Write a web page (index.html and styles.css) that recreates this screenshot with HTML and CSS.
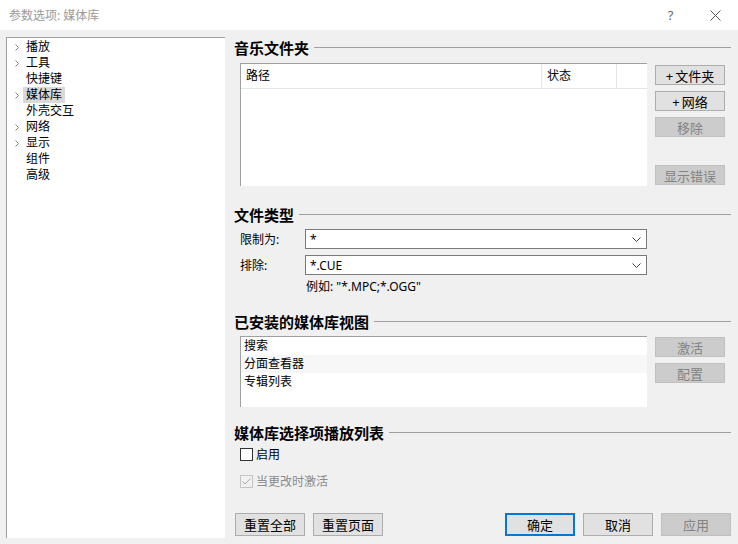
FILE: index.html
```html
<!DOCTYPE html>
<html>
<head>
<meta charset="utf-8">
<title>参数选项: 媒体库</title>
<link rel="stylesheet" href="styles.css">
</head>
<body>
<div class="window">

	<!-- start:titlebar -->
	<div class="titlebar">
		<div class="title">参数选项: 媒体库</div>
		<div class="caption-btn help">?</div>
		<div class="caption-btn close">
			<svg width="11" height="11" viewBox="0 0 11 11"><path d="M0.5 0.5 L10.5 10.5 M10.5 0.5 L0.5 10.5" stroke="#555" stroke-width="1" fill="none"/></svg>
		</div>
	</div>
	<!-- end:titlebar -->

	<div class="main">

		<!-- start:tree -->
		<ul class="tree">
			<li><span class="chev"><svg width="4" height="7" viewBox="0 0 4 7"><polyline points="0.5,0.5 3.5,3.5 0.5,6.5" fill="none" stroke="#8c8c8c"/></svg></span><span class="label">播放</span></li>
			<li><span class="chev"><svg width="4" height="7" viewBox="0 0 4 7"><polyline points="0.5,0.5 3.5,3.5 0.5,6.5" fill="none" stroke="#8c8c8c"/></svg></span><span class="label">工具</span></li>
			<li><span class="chev"></span><span class="label">快捷键</span></li>
			<li><span class="chev"><svg width="4" height="7" viewBox="0 0 4 7"><polyline points="0.5,0.5 3.5,3.5 0.5,6.5" fill="none" stroke="#8c8c8c"/></svg></span><span class="label selected">媒体库</span></li>
			<li><span class="chev"></span><span class="label">外壳交互</span></li>
			<li><span class="chev"><svg width="4" height="7" viewBox="0 0 4 7"><polyline points="0.5,0.5 3.5,3.5 0.5,6.5" fill="none" stroke="#8c8c8c"/></svg></span><span class="label">网络</span></li>
			<li><span class="chev"><svg width="4" height="7" viewBox="0 0 4 7"><polyline points="0.5,0.5 3.5,3.5 0.5,6.5" fill="none" stroke="#8c8c8c"/></svg></span><span class="label">显示</span></li>
			<li><span class="chev"></span><span class="label">组件</span></li>
			<li><span class="chev"></span><span class="label">高级</span></li>
		</ul>
		<!-- end:tree -->

		<!-- start:content -->
		<div class="content">

			<div class="section-head">音乐文件夹</div>
			<div class="folders">
				<div class="listbox folder-list">
					<div class="list-header">
						<div class="col col-path">路径</div>
						<div class="col col-state">状态</div>
						<div class="col col-fill"></div>
					</div>
				</div>
				<div class="side-buttons">
					<div class="btn">+&thinsp;文件夹</div>
					<div class="btn">+&thinsp;网络</div>
					<div class="btn disabled">移除</div>
					<div class="btn disabled push-down">显示错误</div>
				</div>
			</div>

			<div class="section-head types-head">文件类型</div>
			<div class="field first-field">
				<div class="field-label">限制为:</div>
				<div class="combo"><span>*</span><svg width="9" height="5" viewBox="0 0 9 5"><polyline points="0.5,0.5 4.5,4.5 8.5,0.5" fill="none" stroke="#404040"/></svg></div>
			</div>
			<div class="field">
				<div class="field-label">排除:</div>
				<div class="combo"><span>*.CUE</span><svg width="9" height="5" viewBox="0 0 9 5"><polyline points="0.5,0.5 4.5,4.5 8.5,0.5" fill="none" stroke="#404040"/></svg></div>
			</div>
			<div class="hint">例如: "*.MPC;*.OGG"</div>

			<div class="section-head views-head">已安装的媒体库视图</div>
			<div class="views">
				<ul class="listbox view-list">
					<li>搜索</li>
					<li class="hot">分面查看器</li>
					<li>专辑列表</li>
				</ul>
				<div class="side-buttons">
					<div class="btn disabled">激活</div>
					<div class="btn disabled">配置</div>
				</div>
			</div>

			<div class="section-head playlist-head">媒体库选择项播放列表</div>
			<div class="check-row enable-row"><span class="checkbox"></span>启用</div>
			<div class="check-row off-row"><span class="checkbox checked"><svg width="11" height="11" viewBox="0 0 11 11"><polyline points="1.5,5.5 4,8 9.5,2.5" fill="none" stroke="#a8a8a8" stroke-width="1"/></svg></span>当更改时激活</div>

			<div class="footer">
				<div class="btn big">重置全部</div>
				<div class="btn big">重置页面</div>
				<div class="btn big default">确定</div>
				<div class="btn big">取消</div>
				<div class="btn big disabled">应用</div>
			</div>

		</div>
		<!-- end:content -->

	</div>
</div>
</body>
</html>
```

FILE: styles.css
```css
body,ul,li,div {margin:0; padding:0;}
ul {list-style:none;}
* {box-sizing:border-box;}

/* ---------- STRUCTURE ---------- */
body {background:#f0f0f0; color:#000; font:12px "Noto Sans", "Noto Sans CJK SC", sans-serif;}
.window {width:738px; height:544px; overflow:hidden;}
.titlebar {height:30px; background:#fff; display:flex; align-items:center; padding-left:9px;}
.title {flex:1; color:#9a9a9a;}
.caption-btn {width:45px; height:30px; display:flex; align-items:center; justify-content:center; color:#666; font-size:13px;}
.main {display:flex; padding:7px 0 0 6px;}
.content {width:497px; margin-left:9px; display:flex; flex-direction:column;}

/* ---------- TREE ---------- */
.tree {width:219px; height:501px; background:#fff; border-top:1px solid #a0a0a0; border-left:1px solid #a0a0a0; padding-top:1px;}
.tree li {height:16px; line-height:16px; display:flex; align-items:center;}
.chev {width:16px; padding-left:8px; display:flex; align-items:center;}
.label {padding:0 3px; line-height:16px;}
.selected {background:#d9d9d9;}

/* ---------- SECTIONS ---------- */
.section-head {height:20px; display:flex; align-items:center; gap:5px; font-size:15px; font-weight:bold; white-space:nowrap;}
.section-head::after {content:""; flex:1; border-top:1px solid #a0a0a0; margin-top:1px;}
.types-head {margin-top:18px;}
.views-head {margin-top:16px;}
.playlist-head {margin-top:15px;}

.listbox {background:#fff; border-top:1px solid #a0a0a0; border-left:1px solid #a0a0a0; margin-left:6px; width:407px;}
.folders, .views {display:flex;}
.folders {margin-top:6px;}
.folder-list {height:123px;}
.list-header {display:flex; height:25px; border-bottom:1px solid #e5e5e5;}
.col {line-height:24px; padding-left:5px;}
.col-path {width:300px;}
.col-state {width:75px; border-left:1px solid #e5e5e5;}
.col-fill {flex:1; border-left:1px solid #e5e5e5;}

.side-buttons {margin-left:8px; padding-top:2px; display:flex; flex-direction:column; gap:6px;}
.push-down {margin-top:22px;}

.btn {width:70px; height:20px; background:#e1e1e1; border:1px solid #adadad; display:flex; align-items:center; justify-content:center; font-size:13px;}
.btn.disabled {background:#cccccc; border-color:#bfbfbf; color:#838383;}
.btn.big {height:23px;}
.btn.default {border:2px solid #0078d7;}

/* ---------- FIELDS ---------- */
.field {display:flex; align-items:center; margin-top:6px;}
.first-field {margin-top:5px;}
.field-label {width:71px; padding-left:6px;}
.combo {width:342px; height:20px; background:#fff; border:1px solid #7a7a7a; display:flex; align-items:center; justify-content:space-between; padding:0 5px 0 4px;}
.hint {margin-top:4px; padding-left:72px; height:16px; line-height:16px;}

.views {margin-top:5px;}
.view-list {height:71px;}
.view-list li {height:18px; line-height:17px; padding-left:3px;}
.view-list li.hot {background:#f7f7f7;}
.views .side-buttons {padding-top:1px;}

/* ---------- CHECKS ---------- */
.check-row {display:flex; align-items:center; height:16px; padding-left:6px;}
.enable-row {margin-top:4px;}
.off-row {margin-top:11px; color:#8b8b8b;}
.checkbox {width:13px; height:13px; border:1px solid #333; background:#fff; margin-right:3px; display:flex; align-items:center; justify-content:center;}
.checkbox.checked {border-color:#c4c4c4; background:#f0f0f0;}

/* ---------- FOOTER ---------- */
.footer {display:flex; gap:8px; margin-top:24px; padding-left:1px;}
.footer .default {margin-left:auto;}
```
